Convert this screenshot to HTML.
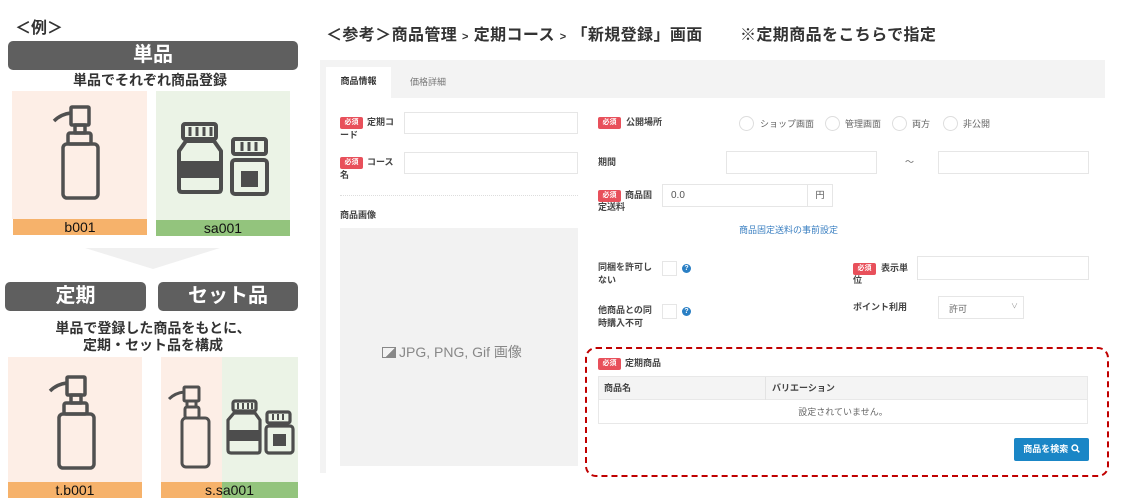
<!DOCTYPE html>
<html><head><meta charset="utf-8"><style>
*{margin:0;padding:0;box-sizing:border-box}
body{width:1137px;height:503px;background:#fff;position:relative;overflow:hidden;font-family:"Liberation Sans","Noto Sans CJK JP",sans-serif;color:#333}
.a{position:absolute}
.bar{position:absolute;background:#5f5f5f;border-radius:5px;color:#fff;font-weight:bold;font-size:20px;text-align:center;line-height:29px}
.sub{position:absolute;font-weight:bold;font-size:14px;color:#333;text-align:center;line-height:17px}
.lab{position:absolute;font-size:14px;color:#111;text-align:center;line-height:16px}
.req{position:absolute;background:#e8505b;color:#fff;font-size:7px;font-weight:bold;width:23px;height:12px;line-height:12px;text-align:center;border-radius:2px}
.fl{position:absolute;font-size:9px;color:#444;font-weight:bold;line-height:13px}
.in{position:absolute;border:1px solid #e6e6e6;background:#fff}
.t{position:absolute;font-size:9px;color:#666;line-height:12px}
.rad{position:absolute;width:15px;height:15px;border:1px solid #ddd;border-radius:50%}
.q{position:absolute;width:9px;height:9px;border-radius:50%;background:#2a7fc4;color:#fff;font-size:7px;font-weight:bold;text-align:center;line-height:9px}
</style></head><body>

<div class="a" style="left:15px;top:14px;font-size:16px;font-weight:bold;color:#333">＜例＞</div>
<div class="bar" style="left:8px;top:41px;width:290px;height:29px">単品</div>
<div class="sub" style="left:0;top:72px;width:300px">単品でそれぞれ商品登録</div>

<div class="a" style="left:12px;top:91px;width:135px;height:128px;background:#fdeee6">
<svg width="135" height="128" viewBox="0 0 135 128"><g fill="none" stroke="#505050" stroke-width="3.5" stroke-linejoin="round"><rect x="59" y="16" width="18" height="18" rx="1"/><path d="M42 30 Q49 23 59 22"/><rect x="63" y="34" width="10" height="8"/><rect x="56" y="42" width="23" height="11" rx="2"/><rect x="51" y="53" width="35" height="54" rx="4"/></g></svg></div>
<div class="lab" style="left:13px;top:219px;width:134px;height:16px;background:#f6b26b">b001</div>

<div class="a" style="left:156px;top:91px;width:134px;height:129px;background:#ebf3e6">
<svg width="134" height="129" viewBox="0 0 134 129"><g fill="none" stroke="#4d4d4d" stroke-width="4" stroke-linejoin="round"><rect x="27" y="33" width="33" height="15" rx="2"/><path d="M34 36v9M41 36v9M48 36v9M55 36v9" stroke-width="3"/><path d="M30 50 L23 60 V98 Q23 101 26 101 H62 Q65 101 65 98 V60 L58 50Z"/><rect x="77" y="48" width="33" height="15" rx="2"/><path d="M86 51v9M93 51v9M100 51v9" stroke-width="3"/><rect x="76" y="69" width="35" height="34" rx="3"/></g><rect x="23" y="70" width="42" height="17" fill="#4d4d4d"/><rect x="85" y="80" width="17" height="16" fill="#4d4d4d"/></svg></div>
<div class="lab" style="left:156px;top:220px;width:134px;height:16px;background:#93c47d">sa001</div>

<svg class="a" style="left:85px;top:247px" width="136" height="24"><polygon points="0,1 135,1 68,22" fill="#f0f0f0"/></svg>

<div class="bar" style="left:5px;top:282px;width:141px;height:29px">定期</div>
<div class="bar" style="left:158px;top:282px;width:140px;height:29px">セット品</div>
<div class="sub" style="left:0;top:320px;width:306px">単品で登録した商品をもとに、<br>定期・セット品を構成</div>

<div class="a" style="left:8px;top:357px;width:134px;height:125px;background:#fdeee6">
<svg width="134" height="125" viewBox="0 0 134 125"><g fill="none" stroke="#505050" stroke-width="3.5" stroke-linejoin="round"><rect x="59" y="20" width="18" height="18" rx="1"/><path d="M42 34 Q49 27 59 26"/><rect x="63" y="38" width="10" height="8"/><rect x="56" y="46" width="23" height="11" rx="2"/><rect x="51" y="57" width="35" height="54" rx="4"/></g></svg></div>
<div class="lab" style="left:8px;top:482px;width:134px;height:16px;background:#f6b26b">t.b001</div>

<div class="a" style="left:161px;top:357px;width:61px;height:125px;background:#fdeee6"></div>
<div class="a" style="left:222px;top:357px;width:76px;height:125px;background:#ebf3e6"></div>
<svg class="a" style="left:161px;top:357px" width="137" height="125" viewBox="0 0 137 125"><g fill="none" stroke="#505050" stroke-width="3" stroke-linejoin="round"><rect x="23" y="30" width="15" height="14" rx="1"/><path d="M8 42 Q14 36 23 35"/><rect x="26" y="44" width="9" height="6"/><rect x="24" y="50" width="14" height="11" rx="2"/><rect x="21" y="61" width="27" height="49" rx="4"/></g><g fill="none" stroke="#4d4d4d" stroke-width="3.2" stroke-linejoin="round"><rect x="72" y="44" width="23" height="10" rx="2"/><path d="M77 46v6M82 46v6M87 46v6M91 46v6" stroke-width="2"/><path d="M73 56 L67 63 V93 Q67 96 70 96 H97 Q99 96 99 93 V63 L94 56Z"/><rect x="106" y="55" width="23" height="11" rx="2"/><path d="M112 57v6M117 57v6M122 57v6" stroke-width="2"/><rect x="105" y="69" width="27" height="27" rx="3"/></g><rect x="67" y="73" width="32" height="11" fill="#4d4d4d"/><rect x="112" y="77" width="13" height="12" fill="#4d4d4d"/></svg>
<div class="a" style="left:161px;top:482px;width:61px;height:16px;background:#f6b26b"></div>
<div class="a" style="left:222px;top:482px;width:76px;height:16px;background:#93c47d"></div>
<div class="lab" style="left:161px;top:482px;width:137px">s.sa001</div>

<!-- right -->
<div class="a" style="left:326px;top:26px;font-size:16px;font-weight:bold;color:#333;white-space:nowrap;line-height:20px;letter-spacing:0.4px">＜参考＞商品管理 <span style="font-size:11px">&gt;</span> 定期コース <span style="font-size:11px">&gt;</span> 「新規登録」画面</div>
<div class="a" style="left:740px;top:26px;font-size:16px;font-weight:bold;color:#333;white-space:nowrap;line-height:20px;letter-spacing:0.4px">※定期商品をこちらで指定</div>

<div class="a" style="left:320px;top:60px;width:785px;height:38px;background:#f3f3f3"></div>
<div class="a" style="left:320px;top:98px;width:6px;height:375px;background:#f3f3f3"></div>
<div class="a" style="left:326px;top:67px;width:65px;height:32px;background:#fff;font-size:9px;font-weight:bold;color:#333;text-align:center;line-height:29px">商品情報</div>
<div class="a" style="left:410px;top:75px;font-size:9px;color:#777">価格詳細</div>

<div class="req" style="left:340px;top:117px">必須</div><div class="fl" style="left:367px;top:116px">定期コ</div><div class="fl" style="left:340px;top:129px">ード</div>
<div class="in" style="left:404px;top:112px;width:174px;height:22px"></div>
<div class="req" style="left:340px;top:157px">必須</div><div class="fl" style="left:367px;top:156px">コース</div><div class="fl" style="left:340px;top:169px">名</div>
<div class="in" style="left:404px;top:152px;width:174px;height:22px"></div>
<div class="a" style="left:340px;top:195px;width:238px;border-top:1px dotted #ddd"></div>
<div class="fl" style="left:340px;top:209px">商品画像</div>
<div class="a" style="left:340px;top:228px;width:238px;height:238px;background:#f2f2f2"></div>
<div class="a" style="left:382px;top:342px;font-size:14px;color:#888;white-space:nowrap"><span style="display:inline-block;width:14px;height:11px;border:1.5px solid #888;vertical-align:-1px;margin-right:3px;background:linear-gradient(135deg,transparent 55%,#888 55%)"></span>JPG, PNG, Gif 画像</div>

<div class="req" style="left:598px;top:117px">必須</div><div class="fl" style="left:626px;top:116px">公開場所</div>
<div class="rad" style="left:739px;top:116px"></div><div class="t" style="left:760px;top:118px">ショップ画面</div>
<div class="rad" style="left:825px;top:116px"></div><div class="t" style="left:845px;top:118px">管理画面</div>
<div class="rad" style="left:892px;top:116px"></div><div class="t" style="left:912px;top:118px">両方</div>
<div class="rad" style="left:943px;top:116px"></div><div class="t" style="left:963px;top:118px">非公開</div>
<div class="fl" style="left:598px;top:156px">期間</div>
<div class="in" style="left:726px;top:151px;width:151px;height:23px"></div>
<div class="t" style="left:905px;top:156px">〜</div>
<div class="in" style="left:938px;top:151px;width:151px;height:23px"></div>
<div class="req" style="left:598px;top:190px">必須</div><div class="fl" style="left:625px;top:189px">商品固</div><div class="fl" style="left:598px;top:201px">定送料</div>
<div class="in" style="left:662px;top:184px;width:146px;height:23px;font-size:10px;color:#555;padding:5px 8px">0.0</div>
<div class="in" style="left:807px;top:184px;width:26px;height:23px;font-size:9px;color:#555;text-align:center;line-height:21px">円</div>
<div class="t" style="left:739px;top:224px;color:#3a7fc1">商品固定送料の事前設定</div>

<div class="fl" style="left:598px;top:261px">同梱を許可し<br>ない</div>
<div class="in" style="left:662px;top:261px;width:15px;height:15px"></div><div class="q" style="left:682px;top:264px">?</div>
<div class="fl" style="left:598px;top:304px">他商品との同<br>時購入不可</div>
<div class="in" style="left:662px;top:304px;width:15px;height:15px"></div><div class="q" style="left:682px;top:307px">?</div>
<div class="req" style="left:853px;top:263px">必須</div><div class="fl" style="left:881px;top:262px">表示単</div><div class="fl" style="left:853px;top:274px">位</div>
<div class="in" style="left:917px;top:256px;width:172px;height:24px"></div>
<div class="fl" style="left:853px;top:301px">ポイント利用</div>
<div class="in" style="left:938px;top:296px;width:86px;height:23px;font-size:9px;color:#666;padding:5px 10px">許可<span style="position:absolute;right:5px;top:4px;font-size:7px;color:#999">∨</span></div>

<div class="a" style="left:585px;top:347px;width:524px;height:130px;border:2.5px dashed #c00000;border-radius:11px"></div>
<div class="req" style="left:598px;top:358px">必須</div><div class="fl" style="left:625px;top:357px">定期商品</div>
<div class="a" style="left:598px;top:376px;width:490px;height:48px;border:1px solid #e8e8e8"></div>
<div class="a" style="left:599px;top:377px;width:488px;height:23px;background:#f4f4f4;border-bottom:1px solid #e8e8e8"></div>
<div class="a" style="left:765px;top:377px;height:23px;border-left:1px solid #e3e3e3"></div>
<div class="fl" style="left:604px;top:382px">商品名</div>
<div class="fl" style="left:772px;top:382px">バリエーション</div>
<div class="t" style="left:598px;top:406px;width:490px;text-align:center">設定されていません。</div>
<div class="a" style="left:1014px;top:438px;width:75px;height:23px;background:#1a86c6;border-radius:2px;color:#fff;font-size:9px;font-weight:bold;line-height:23px;text-align:center">商品を検索 <svg width="9" height="9" viewBox="0 0 9 9" style="vertical-align:-1px"><circle cx="3.8" cy="3.8" r="2.8" fill="none" stroke="#fff" stroke-width="1.4"/><path d="M5.8 5.8L8.3 8.3" stroke="#fff" stroke-width="1.5"/></svg></div>
</body></html>
